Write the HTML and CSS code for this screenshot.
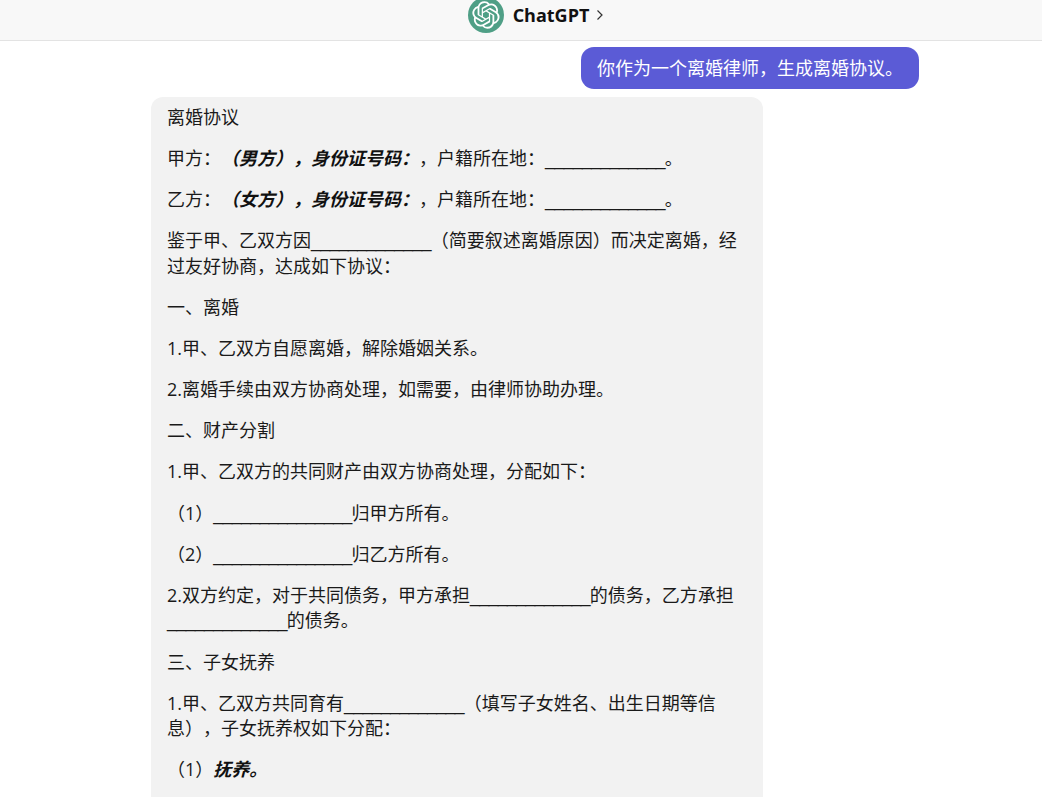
FILE: index.html
```html
<!DOCTYPE html>
<html lang="zh-CN">
<head>
<meta charset="utf-8">
<title>ChatGPT</title>
<link rel="stylesheet" href="styles.css">
</head>
<body>
<header class="topbar">
  <span class="logo">
    <svg viewBox="0 0 41 41" fill="#fff">
      <path d="M37.532 16.87a9.963 9.963 0 0 0-.856-8.184 10.078 10.078 0 0 0-10.855-4.835A9.964 9.964 0 0 0 18.306.5a10.079 10.079 0 0 0-9.614 6.977 9.967 9.967 0 0 0-6.664 4.834 10.08 10.08 0 0 0 1.24 11.817 9.965 9.965 0 0 0 .856 8.185 10.079 10.079 0 0 0 10.855 4.835 9.965 9.965 0 0 0 7.516 3.35 10.078 10.078 0 0 0 9.617-6.981 9.967 9.967 0 0 0 6.663-4.834 10.079 10.079 0 0 0-1.243-11.813ZM22.498 37.886a7.474 7.474 0 0 1-4.799-1.735c.061-.033.168-.091.237-.134l7.964-4.6a1.294 1.294 0 0 0 .655-1.134V19.054l3.366 1.944a.12.12 0 0 1 .066.092v9.299a7.505 7.505 0 0 1-7.49 7.496ZM6.392 31.006a7.471 7.471 0 0 1-.894-5.023c.06.036.162.099.237.141l7.964 4.6a1.297 1.297 0 0 0 1.308 0l9.724-5.614v3.888a.12.12 0 0 1-.048.103l-8.051 4.649a7.504 7.504 0 0 1-10.24-2.744ZM4.297 13.62A7.469 7.469 0 0 1 8.2 10.333c0 .068-.004.19-.004.274v9.201a1.294 1.294 0 0 0 .654 1.132l9.723 5.614-3.366 1.944a.12.12 0 0 1-.114.01L7.04 23.856a7.504 7.504 0 0 1-2.743-10.237Zm27.658 6.437-9.724-5.615 3.367-1.943a.121.121 0 0 1 .113-.01l8.052 4.648a7.498 7.498 0 0 1-1.158 13.528v-9.476a1.293 1.293 0 0 0-.65-1.132Zm3.35-5.043c-.059-.037-.162-.099-.236-.141l-7.965-4.6a1.298 1.298 0 0 0-1.308 0l-9.723 5.614v-3.888a.12.12 0 0 1 .048-.103l8.05-4.645a7.497 7.497 0 0 1 11.135 7.763Zm-21.063 6.929-3.367-1.944a.12.12 0 0 1-.065-.092v-9.299a7.497 7.497 0 0 1 12.293-5.756 6.94 6.94 0 0 0-.236.134l-7.965 4.6a1.294 1.294 0 0 0-.654 1.132l-.006 11.225Zm1.829-3.943 4.33-2.501 4.332 2.5v5l-4.331 2.5-4.331-2.5V18Z"/>
    </svg>
  </span>
  <span class="brand">ChatGPT</span>
  <svg class="chevron" viewBox="0 0 8 12" fill="none" stroke="#333" stroke-width="1.2"><path d="M1.500 1.500 6 6l-4.500 4.500"/></svg>
</header>
<main class="chat">
  <div class="user-row"><div class="user-bubble">你作为一个离婚律师，生成离婚协议。</div></div>
  <article class="reply">
    <p>离婚协议</p>
    <p>甲方：<strong class="em">（男方），身份证号码：</strong>，户籍所在地：<span class="blank">_____________</span>。</p>
    <p>乙方：<strong class="em">（女方），身份证号码：</strong>，户籍所在地：<span class="blank">_____________</span>。</p>
    <p>鉴于甲、乙双方因<span class="blank">_____________</span>（简要叙述离婚原因）而决定离婚，经过友好协商，达成如下协议：</p>
    <p>一、离婚</p>
    <p>1.甲、乙双方自愿离婚，解除婚姻关系。</p>
    <p>2.离婚手续由双方协商处理，如需要，由律师协助办理。</p>
    <p>二、财产分割</p>
    <p>1.甲、乙双方的共同财产由双方协商处理，分配如下：</p>
    <p>（1）<span class="blank">_______________</span>归甲方所有。</p>
    <p>（2）<span class="blank">_______________</span>归乙方所有。</p>
    <p>2.双方约定，对于共同债务，甲方承担<span class="blank">_____________</span>的债务，乙方承担<span class="blank">_____________</span>的债务。</p>
    <p>三、子女抚养</p>
    <p>1.甲、乙双方共同育有<span class="blank">_____________</span>（填写子女姓名、出生日期等信息），子女抚养权如下分配：</p>
    <p>（1）<strong class="em">抚养。</strong></p>
  </article>
</main>
</body>
</html>
```
FILE: styles.css
```css
* { box-sizing: border-box; }
html, body { margin: 0; height: 100%; overflow: hidden; }
body {
  background: #fff;
  color: #1a1a1a;
  font-family: "Open Sans", "Noto Sans CJK SC", sans-serif;
  font-size: 18px;
  font-weight: 400;
  text-spacing-trim: space-all;
  font-feature-settings: "chws" 0, "palt" 0, "kern" 0;
}
.topbar {
  display: flex;
  align-items: center;
  justify-content: center;
  height: 41px;
  padding-left: 30px;
  background: #f8f8f8;
  border-bottom: 1px solid #e3e3e3;
}
.logo {
  display: flex;
  align-items: center;
  justify-content: center;
  width: 36px;
  height: 36px;
  margin-top: -10px;
  border-radius: 50%;
  background: #4f9f86;
}
.logo svg { width: 28px; height: 28px; }
.brand {
  margin-left: 9px;
  margin-top: -11px;
  font-family: "Open Sans", sans-serif;
  font-size: 18px;
  font-weight: 700;
  color: #111;
}
.chevron { width: 8px; height: 12px; margin-left: 7px; margin-top: -10px; }
.chat { padding: 6px 123px 0 151px; }
.user-row { display: flex; justify-content: flex-end; }
.user-bubble {
  width: 338px;
  height: 42px;
  padding: 0 16px;
  border-radius: 13px;
  background: #5b5bd6;
  color: #fff;
  line-height: 42px;
  white-space: nowrap;
}
.reply {
  width: 612px;
  height: 700px;
  margin-top: 8px;
  padding: 8px 16px 0;
  border-radius: 12px 12px 0 0;
  background: #f2f2f2;
  line-height: 25.700px;
  overflow: hidden;
}
.reply p { margin: 0 0 15.400px; }
.blank { font-family: "Liberation Sans", sans-serif; letter-spacing: -0.800px; line-height: 0; }
.em { font-style: italic; font-weight: 700; color: #111; }
```
